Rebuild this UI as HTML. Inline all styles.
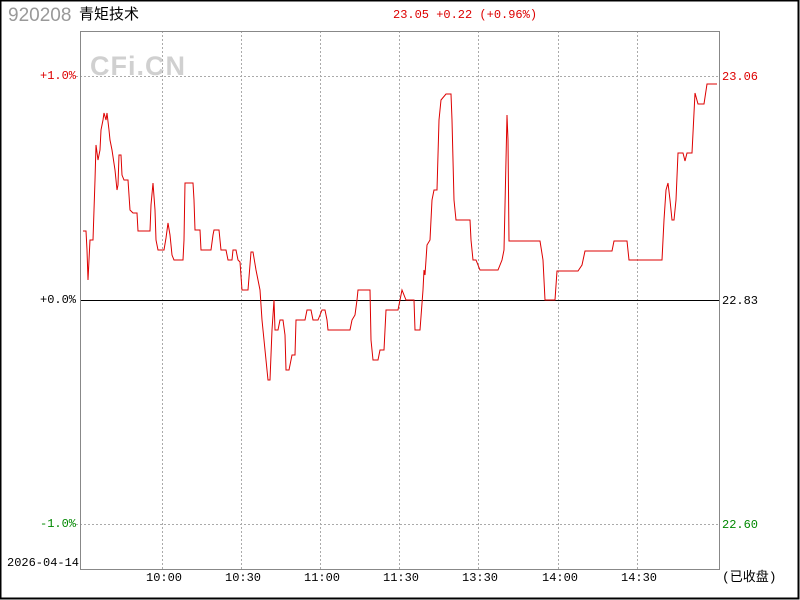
<!DOCTYPE html>
<html><head><meta charset="utf-8"><style>
body{margin:0;background:#fff;}
.w{position:relative;width:800px;height:600px;overflow:hidden;font-family:"Liberation Mono","Noto Sans CJK SC",monospace;}
.t{position:absolute;font-size:12px;line-height:12px;white-space:pre;}
</style></head><body><div class="w">
<svg width="800" height="600" style="position:absolute;left:0;top:0">
<rect x="0.5" y="0.5" width="798" height="598" fill="none" stroke="#000" stroke-width="2"/>
<text x="90" y="75" font-family="Liberation Sans" font-weight="bold" font-size="27" fill="#d0d0d0" letter-spacing="1">CFi.CN</text>
<g stroke="#aaa" stroke-dasharray="2,2" stroke-width="1">
<line x1="162.5" y1="31" x2="162.5" y2="569"/><line x1="241.5" y1="31" x2="241.5" y2="569"/>
<line x1="320.5" y1="31" x2="320.5" y2="569"/><line x1="399.5" y1="31" x2="399.5" y2="569"/>
<line x1="478.5" y1="31" x2="478.5" y2="569"/><line x1="558.5" y1="31" x2="558.5" y2="569"/>
<line x1="637.5" y1="31" x2="637.5" y2="569"/>
<line x1="76" y1="76.5" x2="720" y2="76.5"/><line x1="76" y1="524.5" x2="720" y2="524.5"/>
</g>
<line x1="80" y1="300.5" x2="720" y2="300.5" stroke="#000"/>
<rect x="80.5" y="31.5" width="639" height="538" fill="none" stroke="#888"/>
<polyline fill="none" stroke="#d00" stroke-width="1" points="83,231 86,231 87,250 88,280 89,260 90,240 93,240 94,210 95,180 96,145 98,160 100,150 101,130 103,120 104,113 106,120 107,113 109,130 110,140 112,150 115,170 117,190 118,185 119,155 121,155 122,175 124,180 128,180 129,195 130,210 133,213 137,213 138,231 150,231 151,205 153,183 155,210 156,240 158,250 164,250 166,238 168,223 170,235 172,255 174,260 183,260 184,240 185,183 193,183 194,200 195,230 200,230 201,250 211,250 213,235 214,230 219,230 221,250 226,250 228,260 232,260 233,250 236,250 238,260 240,262 242,290 248,290 251,252 253,252 256,270 258,280 260,290 262,320 266,360 268,380 270,380 272,330 274,300 275,330 278,330 280,320 283,320 285,335 286,370 289,370 292,355 295,355 296,320 305,320 307,310 311,310 313,320 318,320 322,310 325,310 327,320 328,330 350,330 352,320 355,315 357,300 358,290 370,290 371,340 373,360 378,360 380,350 384,350 386,310 398,310 400,300 402,290 406,300 414,300 415,330 420,330 423,290 424,270 425,275 427,245 430,240 432,200 434,190 437,190 439,120 441,100 446,94 451,94 452,120 454,200 456,220 470,220 471,240 473,260 476,260 480,270 498,270 502,260 504,250 506,160 507,115 508,140 509,241 540,241 543,260 545,300 555,300 557,271 578,271 582,265 585,251 612,251 614,241 627,241 629,260 662,260 664,220 666,190 668,183 670,200 672,220 674,220 676,200 678,153 683,153 685,161 687,153 692,153 695,93 698,104 704,104 707,84 717,84"/>
</svg>
<div class="t" style="left:8px;top:6px;font-family:'Liberation Sans',sans-serif;font-size:19px;line-height:20px;color:#999">920208</div>
<div class="t" style="left:79px;top:7px;font-family:'Liberation Sans','Noto Sans CJK SC',sans-serif;font-size:15px;line-height:16px;color:#000">青矩技术</div>
<div class="t" style="left:393px;top:9px;color:#d00">23.05 +0.22 (+0.96%)</div>
<div class="t" style="left:40px;top:70px;color:#d00">+1.0%</div>
<div class="t" style="left:40px;top:294px;color:#000">+0.0%</div>
<div class="t" style="left:40px;top:518px;color:#080">-1.0%</div>
<div class="t" style="left:722px;top:71px;color:#d00">23.06</div>
<div class="t" style="left:722px;top:295px;color:#000">22.83</div>
<div class="t" style="left:722px;top:519px;color:#080">22.60</div>
<div class="t" style="left:7px;top:557px;color:#000">2026-04-14</div>
<div class="t" style="left:146px;top:572px">10:00</div>
<div class="t" style="left:225px;top:572px">10:30</div>
<div class="t" style="left:304px;top:572px">11:00</div>
<div class="t" style="left:383px;top:572px">11:30</div>
<div class="t" style="left:462px;top:572px">13:30</div>
<div class="t" style="left:542px;top:572px">14:00</div>
<div class="t" style="left:621px;top:572px">14:30</div>
<div class="t" style="left:722px;top:572px;font-size:13px">(已收盘)</div>
</div></body></html>
